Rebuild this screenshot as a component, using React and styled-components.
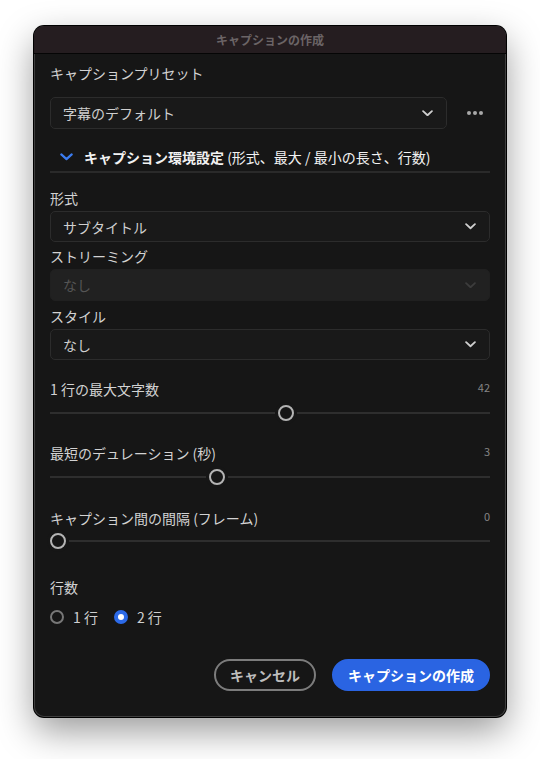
import * as React from "react";
import styled, { createGlobalStyle } from "styled-components";

const GlobalStyle = createGlobalStyle`
  html, body {
    margin: 0;
    background: #ffffff;
    font-family: "Noto Sans CJK JP", "Noto Sans", sans-serif;
  }
`;

const Page = styled.div`
  min-height: 759px;
  box-sizing: border-box;
  padding: 26px 0 0 34px;
  background: #ffffff;
`;

const Window = styled.div`
  width: 472px;
  height: 691px;
  box-sizing: border-box;
  background: #161616;
  border-radius: 10px;
  overflow: hidden;
  box-shadow: 0 0 0 1px #000, inset 0 0 0 1px #3e3e3e, 0 14px 36px rgba(0, 0, 0, 0.4);
  display: flex;
  flex-direction: column;
`;

const TitleBar = styled.div`
  height: 27px;
  flex-shrink: 0;
  background: #251d20;
  border-bottom: 1px solid #050505;
  display: flex;
  align-items: center;
  justify-content: center;
  color: #6b6466;
  font-size: 12px;
  font-weight: 700;
`;

const Content = styled.div`
  padding: 9px 16px 0 16px;
  display: flex;
  flex-direction: column;
`;

const Label = styled.div`
  color: #d2d2d2;
  font-size: 14px;
  line-height: 20px;
  margin-top: ${(p) => p.mt || 0}px;
`;

const LabelRow = styled.div`
  display: flex;
  justify-content: space-between;
  align-items: center;
  margin-top: ${(p) => p.mt || 0}px;
  height: 20px;
`;

const Value = styled.span`
  color: #858585;
  font-size: 11px;
  margin-top: -4px;
`;

const PresetRow = styled.div`
  display: flex;
  align-items: center;
  margin-top: 14px;
`;

const Select = styled.div`
  flex: ${(p) => (p.grow ? "1 1 auto" : "none")};
  height: ${(p) => p.h || 31}px;
  margin-top: ${(p) => p.mt || 0}px;
  box-sizing: border-box;
  border-radius: 5px;
  border: 1px solid ${(p) => (p.disabled ? "#202020" : "#2c2c2c")};
  background: ${(p) => (p.disabled ? "#212121" : "#191919")};
  color: ${(p) => (p.disabled ? "#555" : "#cfcfcf")};
  display: flex;
  align-items: center;
  justify-content: space-between;
  padding: 0 13px 0 12px;
  font-size: 14px;
`;

const MoreButton = styled.div`
  width: 43px;
  display: flex;
  justify-content: flex-end;
  gap: 2px;
  padding-right: 7px;
  box-sizing: border-box;
  span {
    width: 4px;
    height: 4px;
    border-radius: 50%;
    background: #a8a8a8;
  }
`;

const Disclosure = styled.div`
  margin-top: 18px;
  padding: 0 0 4px 10px;
  border-bottom: 2px solid #2a2a2a;
  display: flex;
  align-items: center;
  gap: 11px;
  color: #f2f2f2;
  font-size: 14px;
  line-height: 20px;
  b {
    font-weight: 700;
  }
`;

const SliderWrap = styled.div`
  position: relative;
  height: 20px;
  margin-top: ${(p) => p.mt || 0}px;
`;

const Track = styled.div`
  position: absolute;
  left: 0;
  right: 0;
  top: 9px;
  height: 2px;
  background: #2e2e2e;
`;

const Thumb = styled.div`
  position: absolute;
  top: 2px;
  left: calc(${(p) => p.pct} * (100% - 16px));
  width: 16px;
  height: 16px;
  box-sizing: border-box;
  border-radius: 50%;
  border: 2px solid #b4b4b4;
  background: #161616;
  box-shadow: 0 0 0 3px #161616;
`;

const RadioGroup = styled.div`
  display: flex;
  align-items: center;
  gap: 16px;
  margin-top: 10px;
  height: 20px;
`;

const RadioItem = styled.label`
  display: flex;
  align-items: center;
  gap: 9px;
  color: #cfcfcf;
  font-size: 14px;
`;

const RadioDot = styled.span`
  width: 14px;
  height: 14px;
  box-sizing: border-box;
  border-radius: 50%;
  border: ${(p) => (p.checked ? "4.5px solid #2c6ae8" : "2px solid #777")};
  background: ${(p) => (p.checked ? "#fff" : "transparent")};
`;

const Footer = styled.div`
  display: flex;
  justify-content: flex-end;
  gap: 16px;
  margin-top: 32px;
`;

const Button = styled.button`
  height: 32px;
  box-sizing: border-box;
  border-radius: 16px;
  font-family: inherit;
  font-size: 14px;
  font-weight: 700;
  padding: 0;
  white-space: nowrap;
  border: 2px solid ${(p) => (p.primary ? "#2a64e2" : "#7c7c7c")};
  background: ${(p) => (p.primary ? "#2a64e2" : "transparent")};
  color: ${(p) => (p.primary ? "#ffffff" : "#bdbdbd")};
  width: ${(p) => p.w}px;
`;

const Chevron = ({ color = "#cfcfcf", size = 11 }) => (
  <svg width={size} height={size * 0.6} viewBox="0 0 12 7" fill="none">
    <path d="M1.2 1.2 L6 5.6 L10.8 1.2" stroke={color} strokeWidth="2" strokeLinecap="round" strokeLinejoin="round" />
  </svg>
);

const sliders = [
  { label: "1 行の最大文字数", value: 42, pct: 42 / 78, mt: 19 },
  { label: "最短のデュレーション (秒)", value: 3, pct: 3 / 8, mt: 20 },
  { label: "キャプション間の間隔 (フレーム)", value: 0, pct: 0, mt: 21 },
];

export default function App() {
  return (
    <Page>
      <GlobalStyle />
      <Window>
        <TitleBar>キャプションの作成</TitleBar>
        <Content>
          <Label>キャプションプリセット</Label>
          <PresetRow>
            <Select grow h={32}>
              <span>字幕のデフォルト</span>
              <Chevron />
            </Select>
            <MoreButton>
              <span />
              <span />
              <span />
            </MoreButton>
          </PresetRow>

          <Disclosure>
            <Chevron color="#3b7cf0" size={13} />
            <span>
              <b>キャプション環境設定</b> (形式、最大 / 最小の長さ、行数)
            </span>
          </Disclosure>

          <Label mt={15}>形式</Label>
          <Select mt={3}>
            <span>サブタイトル</span>
            <Chevron />
          </Select>
          <Label mt={4}>ストリーミング</Label>
          <Select mt={3} h={32} disabled>
            <span>なし</span>
            <Chevron color="#3c3c3c" />
          </Select>
          <Label mt={5}>スタイル</Label>
          <Select mt={3}>
            <span>なし</span>
            <Chevron />
          </Select>

          {sliders.map((s, i) => (
            <React.Fragment key={i}>
              <LabelRow mt={s.mt}>
                <Label>{s.label}</Label>
                <Value>{s.value}</Value>
              </LabelRow>
              <SliderWrap mt={i === 2 ? 3 : 4}>
                <Track />
                <Thumb pct={s.pct} />
              </SliderWrap>
            </React.Fragment>
          ))}

          <Label mt={26}>行数</Label>
          <RadioGroup>
            <RadioItem>
              <RadioDot />
              1 行
            </RadioItem>
            <RadioItem>
              <RadioDot checked />
              2 行
            </RadioItem>
          </RadioGroup>

          <Footer>
            <Button w={102}>キャンセル</Button>
            <Button primary w={158}>キャプションの作成</Button>
          </Footer>
        </Content>
      </Window>
    </Page>
  );
}
